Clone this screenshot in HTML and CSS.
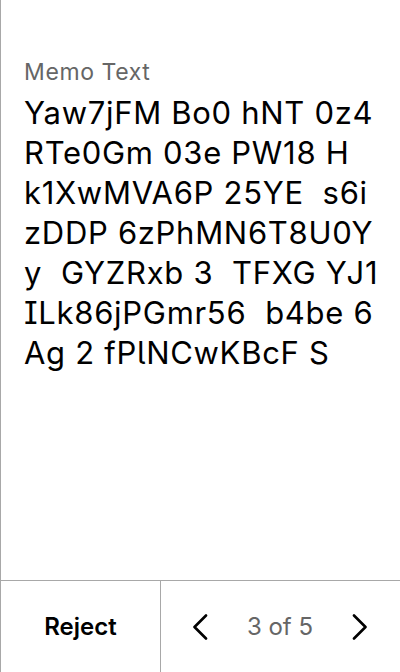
FILE: index.html
```html
<!DOCTYPE html>
<html>
<head>
<meta charset="utf-8">
<link rel="stylesheet" href="styles.css">
</head>
<body>
<div class="screen">
  <main class="content">
    <div class="label">Memo Text</div>
    <div class="memo">Yaw7jFM Bo0 hNT 0z4 RTe0Gm 03e PW18 H k1XwMVA6P 25YE&nbsp; s6i zDDP 6zPhMN6T8U0Y y&nbsp; GYZRxb 3&nbsp; TFXG YJ1 ILk86jPGmr56&nbsp; b4be 6 Ag 2 fPlNCwKBcF S</div>
  </main>
  <footer class="footer">
    <div class="reject">Reject</div>
    <div class="pager">
      <svg class="chev" width="16" height="26" viewBox="0 0 16 26"><path d="M14 1.5 L2.5 13 L14 24.5" fill="none" stroke="#000" stroke-width="2.6" stroke-linecap="round" stroke-linejoin="round"/></svg>
      <span class="count">3 of 5</span>
      <svg class="chev" width="16" height="26" viewBox="0 0 16 26"><path d="M2 1.5 L13.5 13 L2 24.5" fill="none" stroke="#000" stroke-width="2.6" stroke-linecap="round" stroke-linejoin="round"/></svg>
    </div>
  </footer>
</div>
</body>
</html>
```
FILE: styles.css
```css
html, body {
  margin: 0;
  padding: 0;
  background: #fff;
}
.screen {
  width: 400px;
  height: 672px;
  box-sizing: border-box;
  border-left: 1px solid #a8a8a8;
  display: flex;
  flex-direction: column;
  font-family: Inter, "Liberation Sans", sans-serif;
  font-feature-settings: "cv05", "cv08";
}
.content {
  flex: 1;
  padding: 58px 14px 0 23px;
}
.label {
  font-size: 23px;
  line-height: 28px;
  letter-spacing: 0.6px;
  color: #666;
}
.memo {
  margin-top: 7px;
  font-size: 31px;
  line-height: 40px;
  letter-spacing: 0.7px;
  color: #000;
}
.footer {
  height: 92px;
  box-sizing: border-box;
  border-top: 1px solid #a8a8a8;
  display: flex;
}
.reject {
  width: 159px;
  border-right: 1px solid #a8a8a8;
  display: flex;
  align-items: center;
  justify-content: center;
  font-size: 24px;
  font-weight: 600;
  color: #000;
}
.pager {
  flex: 1;
  display: flex;
  align-items: center;
  justify-content: space-between;
  padding: 0 32px 0 31px;
}
.chev {
  display: block;
}
.count {
  font-size: 24px;
  color: #666;
}
```
